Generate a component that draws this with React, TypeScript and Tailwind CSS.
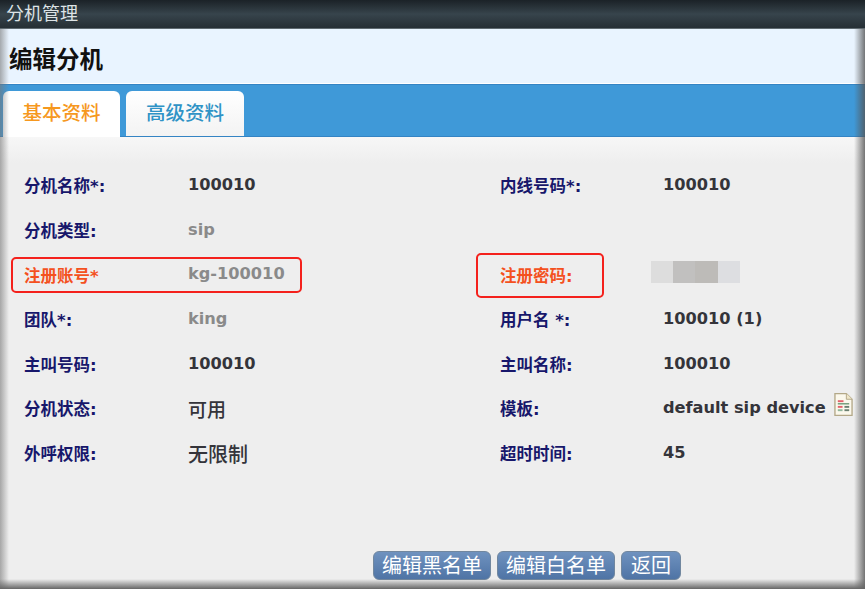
import React from 'react';

const cjk = "font-['DejaVu_Sans','Noto_Sans_CJK_SC',sans-serif]";

type Cell = { label: string; value?: string; tone?: string; hot?: boolean; size?: string };

const rows: [Cell, Cell | null][] = [
  [{ label: '分机名称*:', value: '100010' }, { label: '内线号码*:', value: '100010' }],
  [{ label: '分机类型:', value: 'sip', tone: 'grey' }, null],
  [{ label: '注册账号*', value: 'kg-100010', tone: 'grey', hot: true }, { label: '注册密码:', hot: true }],
  [{ label: '团队*:', value: 'king', tone: 'grey' }, { label: '用户名 *:', value: '100010 (1)' }],
  [{ label: '主叫号码:', value: '100010' }, { label: '主叫名称:', value: '100010' }],
  [{ label: '分机状态:', value: '可用', size: 'big' }, { label: '模板:', value: 'default sip device' }],
  [{ label: '外呼权限:', value: '无限制', size: 'huge' }, { label: '超时时间:', value: '45' }],
];

const DocIcon = () => (
  <svg width="19" height="25" viewBox="0 0 20 25" className="ml-[8px] -mt-2 shrink-0">
    <path d="M1 1h12l6 6v17H1z" fill="#fbf8ec" stroke="#b3a888" strokeWidth="1.4" />
    <path d="M13 1v6h6" fill="#efe6c8" stroke="#b3a888" strokeWidth="1" />
    <path d="M4 8h6v2H4z" fill="#e4606a" />
    <path d="M4 11h12v1.500H4z" fill="#6f9a78" />
    <path d="M4 14h5v2H4z" fill="#e4606a" />
    <path d="M11 14h5v2h-5z" fill="#6a7f70" />
    <path d="M4 17.500h5v2H4z" fill="#8fb59a" />
    <path d="M11 17.500h5v2h-5z" fill="#6a7f70" />
  </svg>
);

const Field = ({ cell, wide }: { cell: Cell | null; wide: number }) => {
  if (!cell) return <div />;
  const valueColor = cell.tone === 'grey' ? 'text-[#8a8a8a]' : 'text-[#34343a]';
  const valueSize = cell.size === 'huge' ? 'text-[20px] font-medium pt-1' : cell.size === 'big' ? 'text-[19px] font-medium pt-1' : 'text-[16.200px] font-bold';
  return (
    <div className="flex items-center">
      <div
        className={`shrink-0 text-[16.500px] font-bold pt-[5px] ${cell.hot ? 'text-[#f4511e]' : 'text-[#17176b]'}`}
        style={{ width: wide }}
      >
        {cell.label}
      </div>
      {cell.value ? (
        <div className={`flex items-center whitespace-nowrap ${valueColor} ${valueSize}`}>
          {cell.value}
          {cell.value.startsWith('default') && <DocIcon />}
        </div>
      ) : (
        <div className="flex h-[22px] -mt-1 -ml-3 opacity-90">
          <div className="w-[22px] bg-[#dcdcdc]" />
          <div className="w-[22px] bg-[#bdbcba]" />
          <div className="w-[23px] bg-[#b8b6b3]" />
          <div className="w-[22px] bg-[#dcdde0]" />
        </div>
      )}
    </div>
  );
};

const ActionButton = ({ children, w }: { children: React.ReactNode; w: string }) => (
  <button className={`h-[29px] ${w} rounded-md border border-[#71879f] bg-gradient-to-b from-[#6f92bf] to-[#4f74a5] text-[20px] leading-none text-white`}>
    {children}
  </button>
);

export default function App() {
  return (
    <div className={`relative w-[865px] h-[589px] overflow-hidden bg-[#eeeeee] ${cjk}`}>
      <div className="h-[29px] border-b border-[#5f6a70] bg-gradient-to-b from-[#1b2227] via-[#37444c] to-[#262f35] px-[6px] text-[18px] leading-[27px] text-[#dde3e6]">
        分机管理
      </div>
      <div className="h-[54px] bg-[#e9f4ff] pl-[9px] pt-[12px] text-[23.500px] font-bold leading-[38px] text-[#111111]">
        编辑分机
      </div>
      <div className="h-px bg-white" />
      <div className="flex h-[53px] items-end gap-[6px] border-y border-[#3484c4] bg-[#3f99d8] pl-[3px]">
        <div className="-mb-px flex h-[46px] w-[117px] items-center justify-center rounded-t-md bg-white text-[19.500px] font-medium text-[#f6981e]">
          基本资料
        </div>
        <div className="flex h-[45px] w-[118px] items-center justify-center rounded-t-md bg-gradient-to-b from-white to-[#f3f3f3] text-[19.500px] font-medium text-[#2f93c6]">
          高级资料
        </div>
      </div>

      <div className="h-[26px] bg-gradient-to-b from-[#f7f7f7] to-[#eeeeee]" />
      <div className="grid grid-cols-[476px_1fr] auto-rows-[44.600px] pl-[24px]">
        {rows.map((pair, i) => (
          <React.Fragment key={i}>
            <Field cell={pair[0]} wide={164} />
            <Field cell={pair[1]} wide={163} />
          </React.Fragment>
        ))}
      </div>

      <div className="mt-[76px] flex gap-[6px] pl-[373px]">
        <ActionButton w="w-[118px]">编辑黑名单</ActionButton>
        <ActionButton w="w-[118px]">编辑白名单</ActionButton>
        <ActionButton w="w-[60px]">返回</ActionButton>
      </div>

      {/* annotation boxes drawn over the form */}
      <div className="absolute left-[11px] top-[257px] h-[36px] w-[291px] rounded-[5px] border-2 border-[#f4211c]" />
      <div className="absolute left-[476px] top-[253px] h-[45px] w-[128px] rounded-[5px] border-2 border-[#f4211c]" />

      {/* window edge shadows */}
      <div className="pointer-events-none absolute inset-y-0 left-0 top-[29px] w-[9px] bg-gradient-to-r from-[#77777799] to-transparent" />
      <div className="pointer-events-none absolute inset-y-0 right-0 top-[29px] w-[11px] bg-gradient-to-l from-[#555555cc] to-transparent" />
      <div className="pointer-events-none absolute inset-x-0 bottom-0 h-[10px] bg-gradient-to-t from-[#666666] to-transparent" />
    </div>
  );
}
